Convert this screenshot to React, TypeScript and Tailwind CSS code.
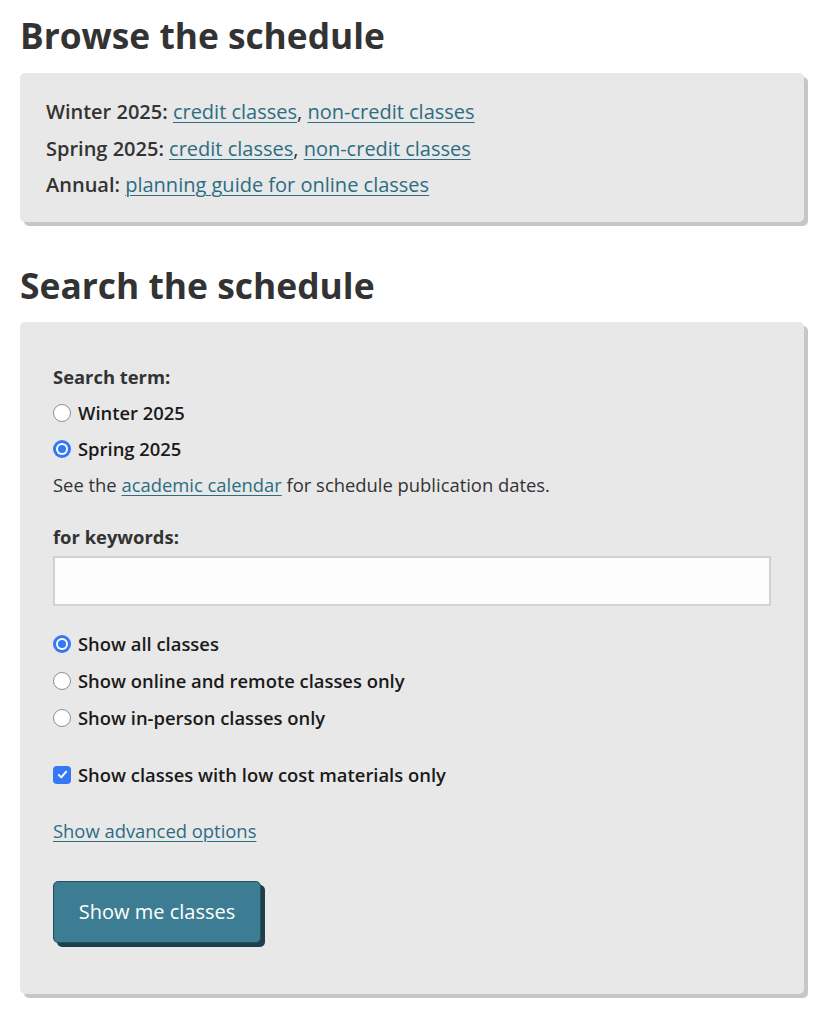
import React from 'react';

const font = "font-['Open_Sans',_'Noto_Sans',sans-serif]";

const Radio = ({ checked }: { checked?: boolean }) =>
  checked ? (
    <span className="w-[18px] h-[18px] rounded-full bg-[#3478f6] flex items-center justify-center shrink-0">
      <span className="w-[12px] h-[12px] rounded-full bg-white flex items-center justify-center">
        <span className="w-[8px] h-[8px] rounded-full bg-[#3478f6]" />
      </span>
    </span>
  ) : (
    <span className="w-[18px] h-[18px] rounded-full border-[1.5px] border-[#8e8e93] bg-white shrink-0" />
  );

const Check = () => (
  <span className="w-[18px] h-[18px] rounded-[4px] bg-[#3478f6] flex items-center justify-center shrink-0">
    <svg viewBox="0 0 16 16" className="w-[13px] h-[13px]" fill="none" stroke="white" strokeWidth="2.4" strokeLinecap="round" strokeLinejoin="round">
      <path d="M3.5 8.5l3 3 6-7" />
    </svg>
  </span>
);

const A = ({ children }: { children: React.ReactNode }) => (
  <a href="#" className="text-[#2c6d82] underline underline-offset-[3px] decoration-1">
    {children}
  </a>
);

export default function App() {
  return (
    <div className={`${font} bg-white text-[#333] min-h-[1024px] pt-[14px] px-[20px]`}>
      <h1 className="text-[35.3px] leading-[43px] font-bold mb-[16px]">Browse the schedule</h1>
      <div className="w-[784px] bg-[#e8e8e8] rounded-[5px] shadow-[4px_4px_0_#c6c6c6] px-[26px] pt-[21px] pb-[18px] text-[20px]">
        <p className="leading-[36.5px]">
          <span className="font-semibold">Winter 2025:</span> <A>credit classes</A>, <A>non-credit classes</A>
        </p>
        <p className="leading-[36.5px]">
          <span className="font-semibold">Spring 2025:</span> <A>credit classes</A>, <A>non-credit classes</A>
        </p>
        <p className="leading-[36.5px]">
          <span className="font-semibold">Annual:</span> <A>planning guide for online classes</A>
        </p>
      </div>

      <h2 className="text-[35.4px] leading-[43px] font-bold mt-[42px] mb-[15px]">Search the schedule</h2>
      <div className="w-[784px] bg-[#e8e8e8] rounded-[5px] shadow-[4px_4px_0_#c6c6c6] px-[33px] pt-[37px] pb-[51px] text-[18.4px]">
        <div className="h-[36px] flex items-center font-bold">Search term:</div>
        <label className="h-[36px] flex items-center gap-[7px] font-semibold text-[#1a1a1a]">
          <Radio /> Winter 2025
        </label>
        <label className="h-[36px] flex items-center gap-[7px] font-semibold text-[#1a1a1a]">
          <Radio checked /> Spring 2025
        </label>
        <p className="h-[36px] flex items-center">
          <span>
            See the <A>academic calendar</A> for schedule publication dates.
          </span>
        </p>

        <div className="h-[36px] flex items-center font-bold mt-[16px]">for keywords:</div>
        <div className="mt-[1px] h-[50px] w-full bg-[#fdfdfd] border-2 border-[#d2d2d2]" />

        <div className="mt-[20px]">
          <label className="h-[37px] flex items-center gap-[7px] font-semibold text-[#1a1a1a]">
            <Radio checked /> Show all classes
          </label>
          <label className="h-[37px] flex items-center gap-[7px] font-semibold text-[#1a1a1a]">
            <Radio /> Show online and remote classes only
          </label>
          <label className="h-[37px] flex items-center gap-[7px] font-semibold text-[#1a1a1a]">
            <Radio /> Show in-person classes only
          </label>
        </div>

        <label className="mt-[20px] h-[36px] flex items-center gap-[7px] font-semibold text-[#1a1a1a]">
          <Check /> Show classes with low cost materials only
        </label>

        <div className="mt-[20px] h-[36px] flex items-center">
          <A>Show advanced options</A>
        </div>

        <button className="mt-[32px] w-[208px] h-[62px] bg-[#3d7d93] text-white text-[20px] rounded-[5px] border border-[#24505f] shadow-[4px_4px_0_#1e3f4b]">
          Show me classes
        </button>
      </div>
    </div>
  );
}
